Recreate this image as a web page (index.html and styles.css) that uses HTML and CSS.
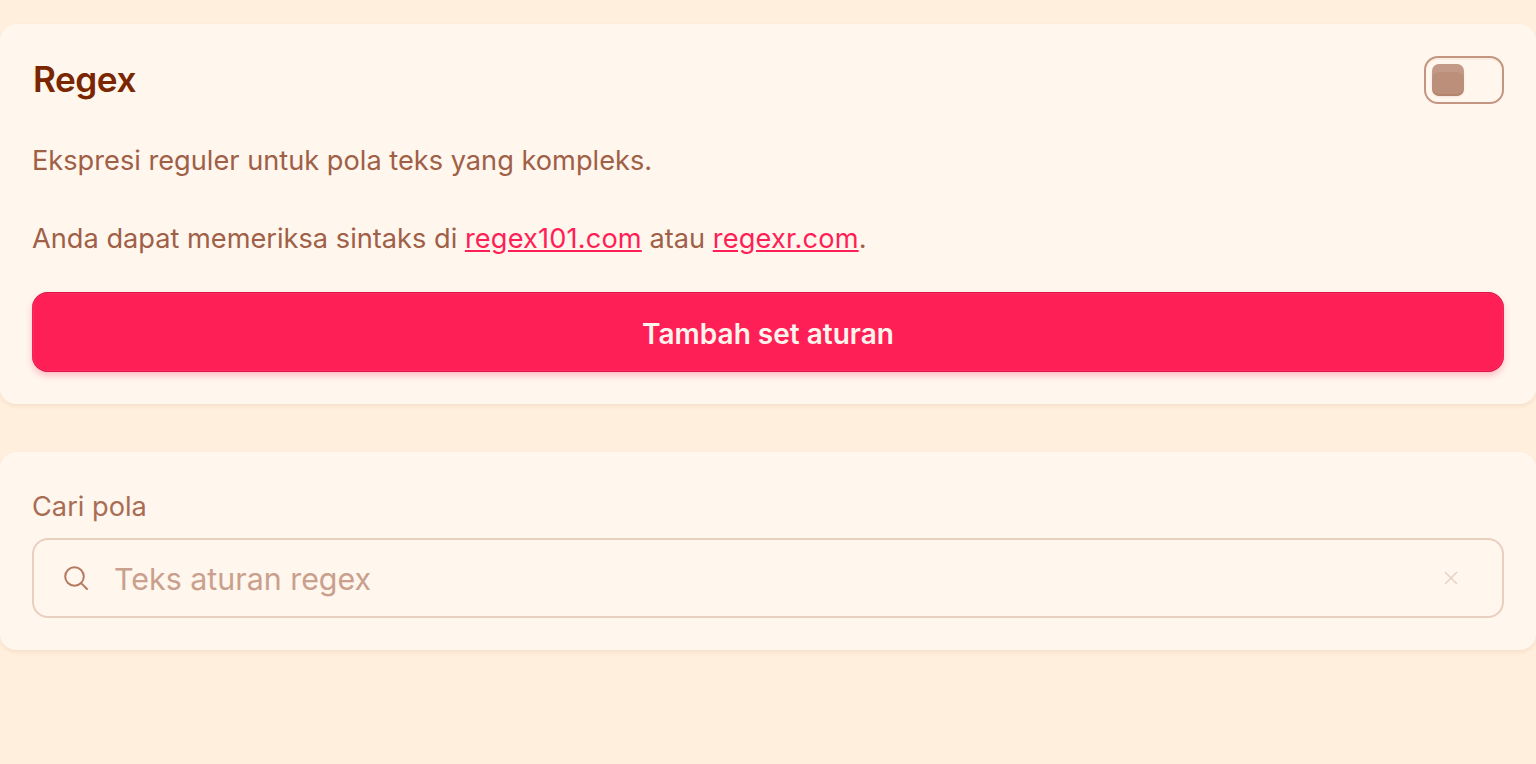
FILE: index.html
```html
<!DOCTYPE html>
<html lang="id">
<head>
<meta charset="utf-8">
<title>Regex</title>
<link rel="stylesheet" href="styles.css">
</head>
<body>
<main class="page">
  <section class="card">
    <div class="head">
      <h1 class="title">Regex</h1>
      <div class="toggle"><span class="knob"></span></div>
    </div>
    <p class="desc">Ekspresi reguler untuk pola teks yang kompleks.</p>
    <p class="desc second">Anda dapat memeriksa sintaks di <a href="#">regex101.com</a> atau <a href="#">regexr.com</a>.</p>
    <button class="add">Tambah set aturan</button>
  </section>
  <section class="card">
    <label class="label">Cari pola</label>
    <div class="field">
      <svg class="search" width="24" height="24" viewBox="0 0 24 24" fill="none" stroke="currentColor" stroke-width="2" stroke-linecap="round" stroke-linejoin="round"><circle cx="10.5" cy="10.5" r="9.3"/><path d="M23 23l-5.9-5.9"/></svg>
      <span class="placeholder">Teks aturan regex</span>
      <svg class="clear" width="14" height="14" viewBox="0 0 14 14" fill="none" stroke="currentColor" stroke-width="1.5"><path d="M1 1l12 12M13 1L1 13"/></svg>
    </div>
  </section>
</main>
</body>
</html>
```
FILE: styles.css
```css
* { box-sizing: border-box; }
html, body { margin: 0; height: 100%; }
body {
  background: #ffefdc;
  font-family: Inter, "Liberation Sans", sans-serif;
  overflow: hidden;
}
.page { padding-top: 24px; display: flex; flex-direction: column; gap: 48px; }
.card {
  background: #fff6ed;
  border-radius: 16px;
  padding: 32px;
  box-shadow: 0 2px 4px rgba(122, 38, 0, 0.08);
}
.head { display: flex; justify-content: space-between; align-items: center; height: 48px; }
.title { margin: 0 0 2px; font-size: 35.2px; line-height: 46px; font-weight: 600; color: #7a2600; letter-spacing: -0.5px; padding-left: 1px; }
.toggle {
  width: 80px; height: 48px;
  border: 2px solid #c49580;
  border-radius: 14px;
  padding: 6px;
  background: #fff6ed;
  box-shadow: inset 0 2px 0 rgba(122,38,0,.04);
}
.knob {
  display: block;
  width: 32px; height: 32px;
  border-radius: 7px;
  background: #bc8f7a;
  box-shadow: inset 0 8px 0 rgba(255,255,255,.1), inset 0 -2px 0 rgba(122,38,0,.1), 0 1px 2px rgba(122,38,0,.08);
}
.desc { margin: 37px 0 0; font-size: 27.2px; line-height: 39px; color: #a05f47; }
.second { margin-top: 39px; }
.desc a { color: #ff1f57; text-decoration: underline; letter-spacing: 0.15px; }
.add {
  display: block; width: 100%; height: 80px; margin-top: 34px; padding-top: 4px;
  border: 0; border-radius: 16px;
  background: #ff1f57;
  color: #fff4ec;
  font: 600 28px Inter, "Liberation Sans", sans-serif;
  box-shadow: inset 0 1px 0 rgba(190,0,55,.45), inset 0 -1px 0 rgba(190,0,55,.4), inset 0 0 0 1px rgba(190,0,55,.2), inset 0 0 0 2px rgba(255,255,255,.05), 0 4px 6px rgba(255,31,87,.25);
}
.label { display: block; font-size: 27.2px; line-height: 44px; padding-top: 1px; height: 44px; margin-bottom: 10px; color: #a86d54; }
.field {
  display: flex; align-items: center; height: 80px;
  border: 2px solid #e8cfc0; border-radius: 16px;
  padding: 0 44px 0 30px;
  color: #b67a62;
}
.placeholder { margin-left: 26px; flex: 1; font-size: 30.4px; line-height: 40px; padding-top: 1px; color: #c9a08d; }
.clear { color: #e8d2c4; }
```
